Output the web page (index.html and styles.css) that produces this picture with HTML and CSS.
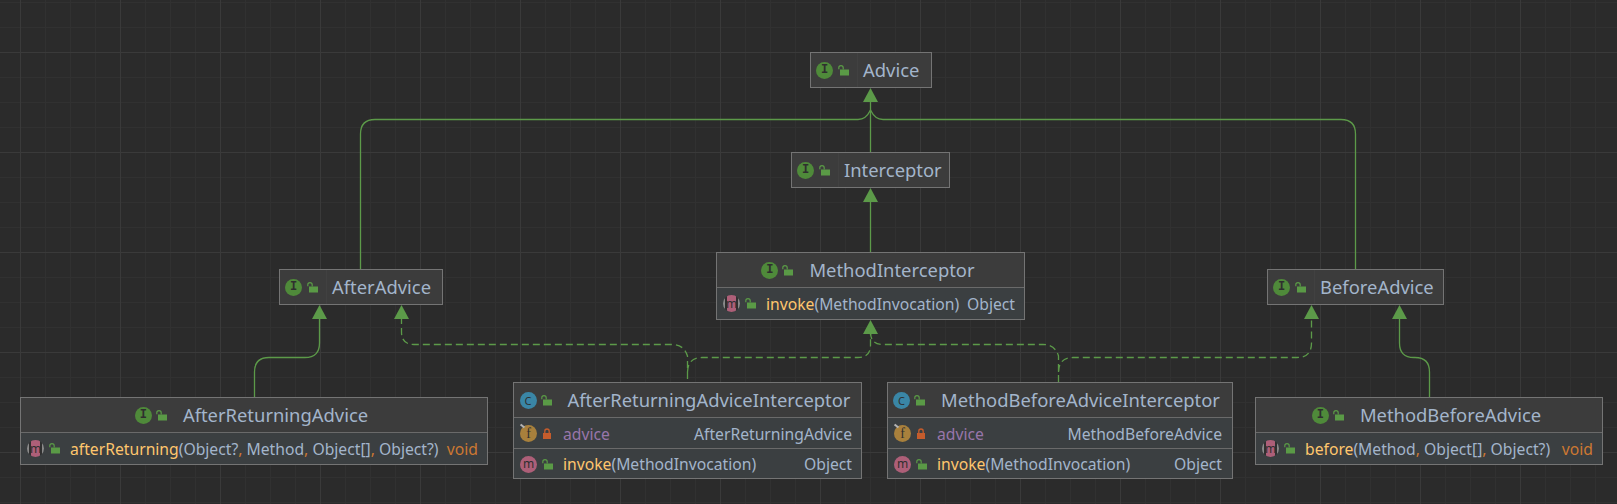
FILE: index.html
```html
<!DOCTYPE html>
<html lang="en">
<head>
<meta charset="utf-8">
<title>Advice diagram</title>
<link rel="stylesheet" href="styles.css">
</head>
<body>
<svg class="defs" width="0" height="0" aria-hidden="true">
  <symbol id="lock-open" viewBox="0 0 11 11">
    <rect x="2" y="4.5" width="9" height="6" fill="#5a9a46"/>
    <path d="M0.8 4.2V2.8a2.2 2.2 0 0 1 4.4 0V4.5" fill="none" stroke="#5a9a46" stroke-width="1.2"/>
  </symbol>
  <symbol id="lock-closed" viewBox="0 0 11 11">
    <rect x="1" y="5" width="8" height="6" fill="#c45c2c"/>
    <path d="M2.8 5V3.2a2.2 2.2 0 0 1 4.4 0V5" fill="none" stroke="#c45c2c" stroke-width="1.3"/>
  </symbol>
</svg>
<main class="diagram">
  <svg class="edges" width="1617" height="504" viewBox="0 0 1617 504" aria-hidden="true">
    <g class="solid">
      <path d="M870.5 100V152"/>
      <path d="M870.5 200V252"/>
      <path d="M360.5 269V134Q360.5 119.5 375 119.5H858Q866 119.5 870.5 110"/>
      <path d="M1355.5 269V134Q1355.5 119.5 1341 119.5H883Q875 119.5 870.5 110"/>
      <path d="M254.5 397V372Q254.5 357.5 269 357.5H305Q319.5 357.5 319.5 343V317"/>
      <path d="M1429.5 397V372Q1429.5 357.5 1415 357.5H1414Q1399.5 357.5 1399.5 343V317"/>
    </g>
    <g class="dashed">
      <path d="M401.5 317V332Q401.5 344.5 414 344.5H672Q684 344.5 687.5 356V382"/>
      <path d="M687.5 372Q688 357.5 702 357.5H858Q870.5 357.5 870.5 345V332"/>
      <path d="M1058.5 382V356Q1055 344.5 1043 344.5H883Q870.5 344.5 870.5 332"/>
      <path d="M1058.5 372Q1059 357.5 1073 357.5H1297Q1311.5 357.5 1311.5 343V317"/>
    </g>
    <g class="heads">
      <polygon points="870.5,88 863,102 878,102"/>
      <polygon points="870.5,188 863,202 878,202"/>
      <polygon points="870.5,320 863,334 878,334"/>
      <polygon points="319.5,305 312,319 327,319"/>
      <polygon points="401.5,305 394,319 409,319"/>
      <polygon points="1311.5,305 1304,319 1319,319"/>
      <polygon points="1399.5,305 1392,319 1407,319"/>
    </g>
  </svg>

  <section class="node n-advice">
    <header class="head compact">
      <div class="marks"><span class="badge iface">I</span><svg class="lock"><use href="#lock-open"/></svg></div>
      <h2 class="title">Advice</h2>
    </header>
  </section>

  <section class="node n-interceptor">
    <header class="head compact">
      <div class="marks"><span class="badge iface">I</span><svg class="lock"><use href="#lock-open"/></svg></div>
      <h2 class="title">Interceptor</h2>
    </header>
  </section>

  <section class="node n-after">
    <header class="head compact">
      <div class="marks"><span class="badge iface">I</span><svg class="lock"><use href="#lock-open"/></svg></div>
      <h2 class="title">AfterAdvice</h2>
    </header>
  </section>

  <section class="node n-before">
    <header class="head compact">
      <div class="marks"><span class="badge iface">I</span><svg class="lock"><use href="#lock-open"/></svg></div>
      <h2 class="title">BeforeAdvice</h2>
    </header>
  </section>

  <section class="node n-mi">
    <header class="head">
      <div class="marks"><span class="badge iface">I</span><svg class="lock"><use href="#lock-open"/></svg></div>
      <h2 class="title">MethodInterceptor</h2>
    </header>
    <div class="row">
      <span class="badge abstract">m</span><svg class="lock"><use href="#lock-open"/></svg>
      <span class="sig"><b class="name">invoke</b>(MethodInvocation)</span>
      <span class="type">Object</span>
    </div>
  </section>

  <section class="node n-ara">
    <header class="head">
      <div class="marks"><span class="badge iface">I</span><svg class="lock"><use href="#lock-open"/></svg></div>
      <h2 class="title">AfterReturningAdvice</h2>
    </header>
    <div class="row">
      <span class="badge abstract">m</span><svg class="lock"><use href="#lock-open"/></svg>
      <span class="sig"><b class="name">afterReturning</b>(Object?<i class="comma">,</i> Method<i class="comma">,</i> Object[]<i class="comma">,</i> Object?)</span>
      <span class="type void">void</span>
    </div>
  </section>

  <section class="node n-arai">
    <header class="head">
      <div class="marks"><span class="badge cls">C</span><svg class="lock"><use href="#lock-open"/></svg></div>
      <h2 class="title">AfterReturningAdviceInterceptor</h2>
    </header>
    <div class="row field">
      <span class="badge fld">f</span><svg class="lock"><use href="#lock-closed"/></svg>
      <span class="sig prop">advice</span>
      <span class="type">AfterReturningAdvice</span>
    </div>
    <div class="row">
      <span class="badge mth">m</span><svg class="lock"><use href="#lock-open"/></svg>
      <span class="sig"><b class="name">invoke</b>(MethodInvocation)</span>
      <span class="type">Object</span>
    </div>
  </section>

  <section class="node n-mbai">
    <header class="head">
      <div class="marks"><span class="badge cls">C</span><svg class="lock"><use href="#lock-open"/></svg></div>
      <h2 class="title">MethodBeforeAdviceInterceptor</h2>
    </header>
    <div class="row field">
      <span class="badge fld">f</span><svg class="lock"><use href="#lock-closed"/></svg>
      <span class="sig prop">advice</span>
      <span class="type">MethodBeforeAdvice</span>
    </div>
    <div class="row">
      <span class="badge mth">m</span><svg class="lock"><use href="#lock-open"/></svg>
      <span class="sig"><b class="name">invoke</b>(MethodInvocation)</span>
      <span class="type">Object</span>
    </div>
  </section>

  <section class="node n-mba">
    <header class="head">
      <div class="marks"><span class="badge iface">I</span><svg class="lock"><use href="#lock-open"/></svg></div>
      <h2 class="title">MethodBeforeAdvice</h2>
    </header>
    <div class="row">
      <span class="badge abstract">m</span><svg class="lock"><use href="#lock-open"/></svg>
      <span class="sig"><b class="name">before</b>(Method<i class="comma">,</i> Object[]<i class="comma">,</i> Object?)</span>
      <span class="type void">void</span>
    </div>
  </section>
</main>
</body>
</html>
```
FILE: styles.css
```css
* { box-sizing: border-box; }
html, body { margin: 0; padding: 0; background: #2b2b2b; }
.defs { position: absolute; }

.diagram {
  position: relative;
  width: 1617px;
  height: 504px;
  overflow: hidden;
  font-family: "Noto Sans", "Open Sans", sans-serif;
  color: #a3b5cb;
  background-color: #2b2b2b;
  background-image:
    linear-gradient(to right, #3a3a3a 1px, transparent 1px),
    linear-gradient(to bottom, #3a3a3a 1px, transparent 1px),
    linear-gradient(to right, #313131 1px, transparent 1px),
    linear-gradient(to bottom, #313131 1px, transparent 1px);
  background-size: 100px 100px, 100px 100px, 25px 25px, 25px 25px;
  background-position: 20px 0, 0 52px, 20px 0, 0 2px;
}

.edges { position: absolute; left: 0; top: 0; }
.edges path { fill: none; stroke: #5c9a49; stroke-width: 1.3; }
.dashed path { stroke-dasharray: 7 4; }
.heads polygon { fill: #5c9a49; }

.node {
  position: absolute;
  border: 1px solid #747474;
  background: #3b3f41;
  display: flex;
  flex-direction: column;
}
.n-advice      { left: 810px;  top: 52px;  width: 122px; height: 36px; }
.n-interceptor { left: 791px;  top: 152px; width: 159px; height: 36px; }
.n-after       { left: 279px;  top: 269px; width: 164px; height: 36px; }
.n-before      { left: 1267px; top: 269px; width: 177px; height: 36px; }
.n-mi          { left: 716px;  top: 252px; width: 309px; height: 68px; }
.n-ara         { left: 20px;   top: 397px; width: 468px; height: 68px; }
.n-arai        { left: 513px;  top: 382px; width: 349px; height: 97px; }
.n-mbai        { left: 887px;  top: 382px; width: 346px; height: 97px; }
.n-mba         { left: 1255px; top: 397px; width: 348px; height: 68px; }

.head {
  height: 35px;
  flex: none;
  display: flex;
  align-items: center;
  justify-content: center;
  padding-right: 5px;
  background: #3c3c3c;
  border-bottom: 1px solid #6a6a6a;
}
.n-mbai .head { padding-right: 7px; }
.head.compact {
  height: 100%;
  padding-right: 0;
  border-bottom: 0;
  justify-content: flex-start;
}
.marks {
  display: flex;
  align-items: center;
  gap: 4px;
  padding-right: 8px;
}
.compact .marks {
  height: 100%;
  padding-left: 5px;
  gap: 5px;
  border-right: 1px solid #414141;
}
.title {
  margin: 0 0 0 8px;
  font-size: 18.4px;
  font-weight: 400;
  line-height: 24px;
  white-space: nowrap;
}
.compact .title { margin-left: 5px; }

.row {
  flex: 1;
  display: flex;
  align-items: center;
  padding: 0 9px 0 6px;
  font-size: 15.7px;
  white-space: nowrap;
}
.n-mbai .row { padding-right: 10px; }
.field { border-bottom: 1px solid #6a6a6a; }
.field, .field + .row { padding-top: 2px; }
.sig { margin-left: 10px; flex: 1; }
.name { font-weight: 400; color: #ffc66d; }
.comma { font-style: normal; color: #cc7832; }
.prop { color: #9876aa; }
.void { color: #cc7832; }
.lock { width: 11px; height: 11px; flex: none; }
.row .lock { margin-left: 5px; }

.badge {
  position: relative;
  width: 17px;
  height: 17px;
  flex: none;
  border-radius: 50%;
  display: flex;
  align-items: center;
  justify-content: center;
  font-size: 12px;
  line-height: 1;
  color: #2f2f2f;
}
.iface { background: #4f8a3a; font-family: "Liberation Mono", monospace; font-weight: 700; }
.cls   { background: #3a86a6; font-family: "Noto Sans", sans-serif; font-size: 11px; }
.mth   { background: #ad5f78; font-family: "Noto Sans", sans-serif; }
.fld   { background: #a8803c; font-family: "Liberation Serif", serif; font-size: 14px; }
.fld::before {
  content: "";
  position: absolute;
  left: 0;
  top: 0;
  width: 5px;
  height: 2px;
  background: #b4b4b4;
  transform: rotate(40deg);
}
.abstract {
  font-family: "Noto Sans", sans-serif;
  background: linear-gradient(to right,
    #8a8a8a 0 2px, #303030 2px 4px,
    #ad5f78 4px 13px,
    #303030 13px 15px, #8a8a8a 15px 17px);
}
```
